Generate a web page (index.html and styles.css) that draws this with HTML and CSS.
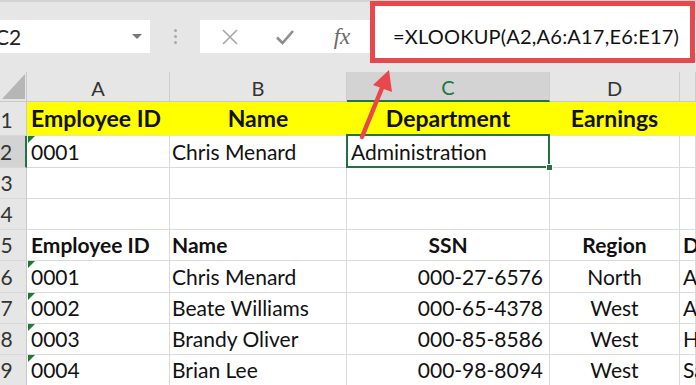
FILE: index.html
```html
<!DOCTYPE html>
<html lang="en">
<head>
    <meta charset="UTF-8">
    <meta name="viewport" content="width=device-width, initial-scale=1.0">
    <title>XLOOKUP Example</title>
    <link rel="stylesheet" href="styles.css">
</head>
<body>
    <div class="ribbon">
        <div class="namebox">
            <span class="ref">C2</span>
            <span class="caret"></span>
        </div>
        <div class="grip"><i></i><i></i><i></i></div>
        <div class="formula-bar">
            <span class="fbtn cancel">
                <svg width="18" height="18" viewBox="0 0 18 18"><path d="M2 2 L16 16 M16 2 L2 16" stroke="#a8a8a8" stroke-width="1.6" fill="none"/></svg>
            </span>
            <span class="fbtn enter">
                <svg width="20" height="16" viewBox="0 0 20 16"><path d="M2 8.5 L7.5 14 L18 2" stroke="#8e8e8e" stroke-width="2.6" fill="none"/></svg>
            </span>
            <span class="fbtn fx">fx</span>
        </div>
        <div class="callout">=XLOOKUP(A2,A6:A17,E6:E17)</div>
    </div>

    <div class="sheet">
        <!-- column headers -->
        <div class="corner"></div>
        <div class="ch">A</div>
        <div class="ch">B</div>
        <div class="ch active">C</div>
        <div class="ch">D</div>
        <div class="ch"></div>

        <!-- row 1 -->
        <div class="rh">1</div>
        <div class="c hl b">Employee ID</div>
        <div class="c hl b mid">Name</div>
        <div class="c hl b mid">Department</div>
        <div class="c hl b mid">Earnings</div>
        <div class="c hl"></div>

        <!-- row 2 -->
        <div class="rh active">2</div>
        <div class="c flag">0001</div>
        <div class="c colb">Chris Menard</div>
        <div class="c sel">Administration<span class="handle"></span></div>
        <div class="c"></div>
        <div class="c"></div>

        <!-- rows 3, 4 -->
        <div class="rh">3</div>
        <div class="c"></div><div class="c"></div><div class="c"></div><div class="c"></div><div class="c"></div>
        <div class="rh">4</div>
        <div class="c"></div><div class="c"></div><div class="c"></div><div class="c"></div><div class="c"></div>

        <!-- row 5 -->
        <div class="rh">5</div>
        <div class="c b">Employee ID</div>
        <div class="c b colb">Name</div>
        <div class="c b mid">SSN</div>
        <div class="c b mid">Region</div>
        <div class="c b cole">Department</div>

        <!-- data -->
        <div class="rh">6</div>
        <div class="c flag">0001</div>
        <div class="c colb">Chris Menard</div>
        <div class="c end">000-27-6576</div>
        <div class="c mid">North</div>
        <div class="c cole">Administration</div>

        <div class="rh">7</div>
        <div class="c flag">0002</div>
        <div class="c colb">Beate Williams</div>
        <div class="c end">000-65-4378</div>
        <div class="c mid">West</div>
        <div class="c cole">Accounting</div>

        <div class="rh">8</div>
        <div class="c flag">0003</div>
        <div class="c colb">Brandy Oliver</div>
        <div class="c end">000-85-8586</div>
        <div class="c mid">West</div>
        <div class="c cole">HR</div>

        <div class="rh">9</div>
        <div class="c flag">0004</div>
        <div class="c colb">Brian Lee</div>
        <div class="c end">000-98-8094</div>
        <div class="c mid">West</div>
        <div class="c cole">Sales</div>
    </div>

    <svg class="arrow" width="696" height="385" viewBox="0 0 696 385">
        <line x1="362" y1="137" x2="384" y2="83" stroke="#e8484c" stroke-width="4.5" stroke-linecap="round"/>
        <polygon points="389,70 373,85 392,92" fill="#e8484c"/>
    </svg>
</body>
</html>
```

FILE: styles.css
```css
* {
    margin: 0;
    padding: 0;
    box-sizing: border-box;
}

body {
    width: 696px;
    height: 385px;
    overflow: hidden;
    position: relative;
    background: #e6e6e6;
    font-family: Lato, "Liberation Sans", sans-serif;
    color: #111;
}

/* formula bar area */
.ribbon {
    height: 72px;
    display: flex;
    align-items: flex-start;
    padding-top: 18px;
    border-top: 2px solid #d6d2d2;
}

.namebox {
    width: 150px;
    height: 33px;
    background: #fff;
    display: flex;
    align-items: center;
    justify-content: space-between;
    padding-right: 8px;
    font-size: 21px;
    color: #222;
}

.namebox .ref {
    margin-left: -5px;
}

.caret {
    border-left: 5px solid transparent;
    border-right: 5px solid transparent;
    border-top: 5px solid #777;
}

.grip {
    width: 50px;
    height: 33px;
    display: flex;
    flex-direction: column;
    align-items: center;
    justify-content: center;
    gap: 3px;
}

.grip i {
    width: 3px;
    height: 3px;
    border-radius: 50%;
    background: #a9a9a9;
}

.formula-bar {
    flex: 1;
    height: 33px;
    background: #fff;
    display: flex;
    align-items: center;
    padding-left: 20px;
}

.fbtn {
    display: flex;
    align-items: center;
    justify-content: center;
    width: 20px;
}

.cancel { margin-right: 35px; }
.enter { margin-right: 37px; }

.fx {
    font-family: "Liberation Serif", serif;
    font-style: italic;
    font-size: 23px;
    color: #6a6a6a;
}

.callout {
    position: absolute;
    left: 370px;
    top: 1px;
    width: 325px;
    height: 62px;
    border: 5px solid #e8484c;
    background: #fff;
    display: flex;
    align-items: center;
    padding: 7px 0 0 18px;
    font-size: 20px;
    letter-spacing: 0.2px;
    color: #111;
    white-space: nowrap;
}

/* worksheet */
.sheet {
    display: grid;
    grid-template-columns: 27px 143px 177px 203px 130px 16px;
    grid-template-rows: 30px 34px 32px 31px 31px 31px 32px 31px 31px 31px;
    background: #fff;
}

.corner {
    background: #e6e6e6;
    border-right: 1px solid #c9c9c9;
    border-bottom: 1px solid #c9c9c9;
    position: relative;
}

.corner::after {
    content: "";
    position: absolute;
    left: 2px;
    top: 2px;
    width: 23px;
    height: 25px;
    background: #b6b6b6;
    clip-path: polygon(100% 0, 100% 100%, 0 100%);
}

.ch {
    background: #e6e6e6;
    border-right: 1px solid #cdcdcd;
    border-bottom: 1px solid #c9c9c9;
    display: flex;
    align-items: center;
    justify-content: center;
    padding-top: 2px;
    font-size: 20px;
    color: #333;
}

.ch.active {
    background: #d3d3d3;
    border-bottom: 2px solid #217346;
    color: #217346;
}

.rh {
    background: #e6e6e6;
    border-right: 1px solid #c9c9c9;
    border-bottom: 1px solid #d8d8d8;
    display: flex;
    align-items: flex-end;
    justify-content: center;
    padding: 0 13px 5px 0;
    font-size: 21px;
    line-height: 1;
    color: #333;
}

.rh.active {
    background: #d3d3d3;
    border-right: 2px solid #217346;
}

.c {
    position: relative;
    border-right: 1px solid #dadada;
    border-bottom: 1px solid #dadada;
    display: flex;
    align-items: flex-end;
    padding: 0 4px 5px 4px;
    font-size: 21px;
    line-height: 1;
    white-space: nowrap;
}

.colb { padding-left: 2px; }
.cole { padding-left: 3px; }

.b { font-weight: 700; }
.mid { justify-content: center; }
.end { justify-content: flex-end; padding-right: 6px; }

.hl {
    background: #ffff00;
    border-right-color: #ffff00;
    border-bottom-color: #e8e8a0;
    font-size: 23px;
}

.flag::before {
    content: "";
    position: absolute;
    left: 1px;
    top: 0;
    width: 7px;
    height: 7px;
    background: #1e7b34;
    clip-path: polygon(0 0, 100% 0, 0 100%);
}

.sel::after {
    content: "";
    position: absolute;
    left: -1px;
    top: -2px;
    right: -1px;
    bottom: -1px;
    border: 2px solid #217346;
}

.handle {
    position: absolute;
    right: -4px;
    bottom: -4px;
    width: 7px;
    height: 7px;
    background: #217346;
    border: 1px solid #fff;
    z-index: 1;
}

.arrow {
    position: absolute;
    left: 0;
    top: 0;
    pointer-events: none;
}
```
